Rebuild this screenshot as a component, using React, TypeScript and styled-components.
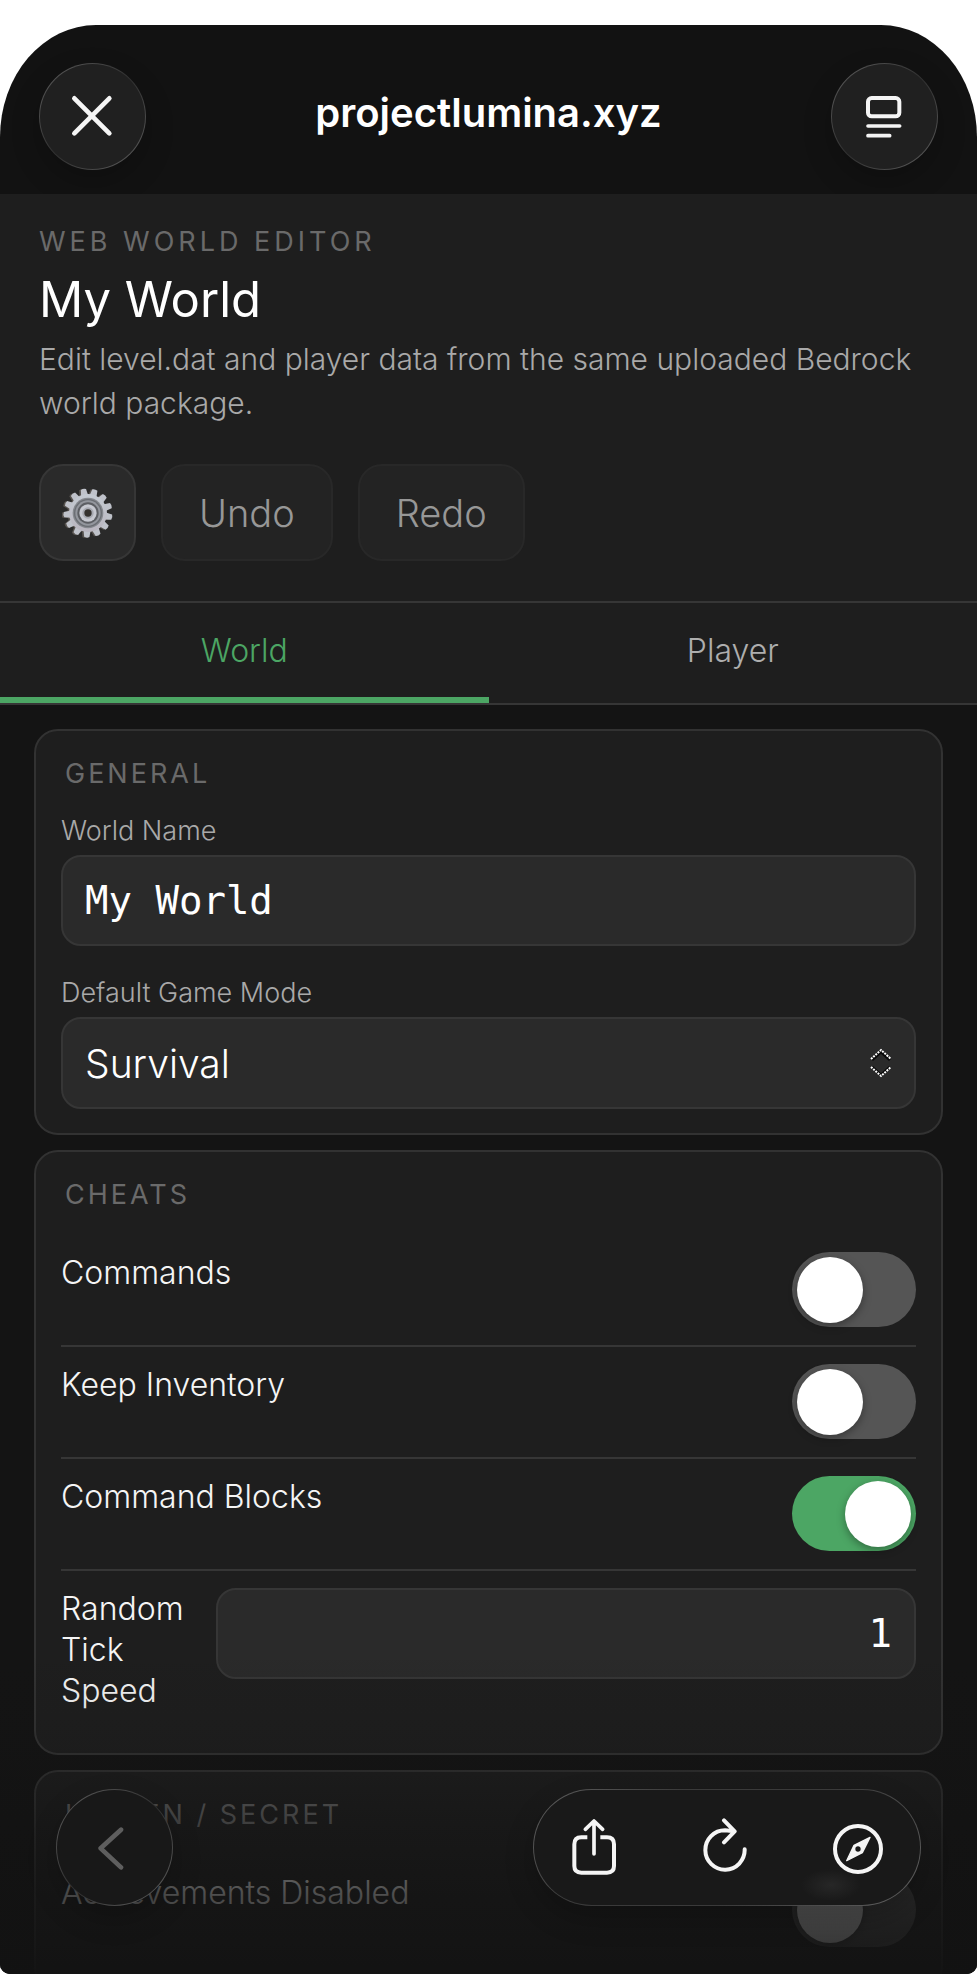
import React, { useId, useState } from 'react';
import styled, { createGlobalStyle, css } from 'styled-components';

const color = {
  chrome: '#121212',
  content: '#141414',
  panel: '#1e1e1e',
  field: '#2a2a2a',
  line: '#363636',
  text: '#f5f5f5',
  muted: '#a9a9a9',
  faint: '#6a6a6a',
  accent: '#4ca664',
};

const sans = "Inter, 'Liberation Sans', sans-serif";
const mono = "'DejaVu Sans Mono', 'Liberation Mono', monospace";

const GlobalStyle = createGlobalStyle`
  *, *::before, *::after { box-sizing: border-box; }
  body {
    margin: 0;
    padding-top: 25px;
    background: #ffffff;
    color: ${color.text};
    font-family: ${sans};
    font-weight: 300;
  }
  button, input, select { margin: 0; font-family: inherit; font-weight: inherit; }
`;

const Sheet = styled.div`
  position: relative;
  display: flex;
  flex-direction: column;
  height: calc(100vh - 25px);
  overflow: hidden;
  border-radius: 96px 96px 10px 10px / 112px 112px 10px 10px;
  background: ${color.chrome};
`;

const BrowserBar = styled.header`
  display: flex;
  flex: none;
  align-items: center;
  justify-content: space-between;
  padding: 38px 39px 24px;
`;

const SiteName = styled.div`
  padding-bottom: 8px;
  color: #ffffff;
  font-size: 40px;
  font-weight: 600;
  line-height: 48px;
`;

const glassRim = css`
  border: 1px solid transparent;
  box-shadow: 0 12px 30px rgba(0, 0, 0, 0.2);
`;

const RoundButton = styled.button<{ $size: number; $fill: string }>`
  ${glassRim}
  display: grid;
  place-items: center;
  width: ${(p) => p.$size}px;
  height: ${(p) => p.$size}px;
  padding: 0;
  border-radius: 50%;
  background:
    linear-gradient(${(p) => p.$fill}, ${(p) => p.$fill}) padding-box,
    linear-gradient(135deg, #606060, #303030 50%, #606060) border-box;
  color: #f5f5f5;

  &:disabled { color: #5e5e5e; }
`;

const Page = styled.main`
  flex: 1;
  min-height: 0;
  overflow: hidden;
  background: ${color.content};
`;

const Hero = styled.section`
  padding: 32px 39px 40px;
  border-bottom: 2px solid ${color.line};
  background: ${color.panel};
`;

const Eyebrow = styled.p`
  margin: 0 0 14px;
  color: ${color.faint};
  font-size: 27px;
  font-weight: 400;
  letter-spacing: 4px;
  line-height: 32px;
  text-transform: uppercase;
`;

const Title = styled.h1`
  margin: 0 0 9px;
  color: #ffffff;
  font-size: 49px;
  font-weight: 400;
  line-height: 56px;
`;

const Lead = styled.p`
  margin: 0 0 39px;
  color: ${color.muted};
  font-size: 30px;
  line-height: 44px;
`;

const Actions = styled.div`
  display: flex;
  gap: 25px;
`;

const ActionButton = styled.button<{ $square?: boolean }>`
  display: grid;
  place-items: center;
  width: ${(p) => (p.$square ? '97px' : 'auto')};
  height: 97px;
  padding: 0 ${(p) => (p.$square ? 0 : 36)}px;
  border: 2px solid ${color.line};
  border-radius: 24px;
  background: ${color.field};
  color: ${color.text};
  font-size: 38px;

  &:disabled {
    border-color: #282828;
    background: #232323;
    color: #979797;
  }
`;

const Tabs = styled.div`
  display: grid;
  grid-template-columns: 1fr 1fr;
  border-bottom: 2px solid ${color.line};
  background: ${color.panel};
`;

const Tab = styled.button<{ $active: boolean }>`
  height: 100px;
  padding: 0;
  border: 0;
  border-bottom: 6px solid ${(p) => (p.$active ? color.accent : 'transparent')};
  background: none;
  color: ${(p) => (p.$active ? color.accent : '#aeaeae')};
  font-size: 32px;
`;

const Cards = styled.div`
  display: flex;
  flex-direction: column;
  gap: 15px;
  padding: 24px 34px;
`;

const Card = styled.section`
  padding: 27px 25px 24px;
  border: 2px solid #323232;
  border-radius: 24px;
  background: ${color.panel};
`;

const CardTitle = styled.h2`
  margin: 0 0 24px;
  padding-left: 4px;
  color: ${color.faint};
  font-size: 27px;
  font-weight: 400;
  letter-spacing: 3px;
  line-height: 32px;
  text-transform: uppercase;
`;

const Field = styled.div`
  display: flex;
  flex-direction: column;
  gap: 7px;

  & + & { margin-top: 30px; }
`;

const FieldLabel = styled.label`
  color: ${color.muted};
  font-size: 27px;
  line-height: 34px;
`;

const control = css`
  width: 100%;
  border: 2px solid ${color.line};
  border-radius: 20px;
  outline: none;
  background: ${color.field};
  color: #ffffff;
`;

const TextBox = styled.input<{ $end?: boolean }>`
  ${control}
  appearance: none;
  height: 91px;
  padding: 0 22px;
  font-family: ${mono};
  font-size: 39px;
  font-weight: 400;
  text-align: ${(p) => (p.$end ? 'right' : 'left')};
`;

const SelectWrap = styled.div`
  position: relative;
  display: flex;
`;

const Select = styled.select`
  ${control}
  appearance: none;
  height: 92px;
  padding: 0 64px 0 22px;
  font-size: 39px;
`;

const SelectArrows = styled.svg`
  position: absolute;
  top: 50%;
  right: 23px;
  width: 24px;
  height: 30px;
  transform: translateY(-50%);
  pointer-events: none;
`;

const Row = styled.div<{ $wide?: boolean }>`
  display: grid;
  grid-template-columns: ${(p) => (p.$wide ? '124px 1fr' : '1fr auto')};
  gap: 31px;
  align-items: start;
  padding: 17px 0 18px;

  & + & { border-top: 2px solid ${color.line}; }
`;

const RowLabel = styled.label`
  color: ${color.text};
  font-size: 32px;
  line-height: 41px;
`;

const Switch = styled.input`
  appearance: none;
  display: flex;
  align-items: center;
  width: 124px;
  height: 75px;
  padding: 0 5px;
  border-radius: 38px;
  background: #555555;

  &::before {
    content: '';
    width: 66px;
    height: 66px;
    border-radius: 50%;
    background: #ffffff;
    box-shadow: 0 3px 8px rgba(0, 0, 0, 0.35);
  }

  &:checked {
    justify-content: flex-end;
    background: ${color.accent};
  }
`;

const Fade = styled.div`
  position: absolute;
  inset: auto 0 0;
  height: 324px;
  background: linear-gradient(
    rgba(18, 18, 18, 0),
    rgba(18, 18, 18, 0.12) 30%,
    rgba(18, 18, 18, 0.48) 52%,
    rgba(18, 18, 18, 0.74) 76%,
    rgba(18, 18, 18, 0.83) 90%,
    rgba(18, 18, 18, 0.94)
  );
  pointer-events: none;
`;

const BottomBar = styled.nav`
  position: absolute;
  inset: auto 56px 68px;
  display: flex;
  align-items: center;
  justify-content: space-between;
`;

const Pill = styled.div`
  ${glassRim}
  display: flex;
  align-items: center;
  justify-content: space-between;
  width: 388px;
  height: 117px;
  padding: 0 37px;
  border-radius: 59px;
  background:
    radial-gradient(30px 16px at 297px 95px, #272727, rgba(39, 39, 39, 0)) padding-box,
    linear-gradient(#191919, #191919) padding-box,
    linear-gradient(135deg, #606060, #3a3a3a 30%, #3a3a3a 60%, #606060) border-box;
`;

const PillButton = styled.button`
  display: grid;
  padding: 0;
  border: 0;
  background: none;
  color: #f5f5f5;
`;

const Glyph = styled.svg`
  display: block;
  fill: none;
  stroke: currentColor;
  stroke-linecap: round;
  stroke-linejoin: round;
`;

const teeth = Array.from({ length: 13 }, (_, i) => -11 + (i * 360) / 13);
const tooth = 'M-11 -50 L-8 -72 Q0 -76 8 -72 L11 -50 Z';

function Gear() {
  return (
    <svg width="52" height="52" viewBox="-78 -78 156 156" aria-hidden="true">
      <defs>
        <linearGradient id="steel" x1="0" y1="0" x2="0" y2="1">
          <stop offset="0" stopColor="#c4cad2" />
          <stop offset="1" stopColor="#b9b5bf" />
        </linearGradient>
      </defs>
      <g fill="#57534f" transform="translate(-5 1)">
        <circle r="57" />
        {teeth.map((a) => <path key={a} d={tooth} transform={`rotate(${a})`} />)}
      </g>
      <g fill="#bfc2ca">
        {teeth.map((a) => <path key={a} d={tooth} transform={`rotate(${a})`} />)}
      </g>
      <circle r="57" fill="url(#steel)" />
      <circle r="46" fill="#85888e" />
      <circle r="42" fill="#6a6d73" />
      <circle r="38" fill="#93969d" />
      <circle r="32" fill="#5c5e63" />
      <circle r="26" fill="#c6c8d0" />
      <circle r="17" fill="#a6a8b0" />
      <circle r="11" fill="#35322f" />
    </svg>
  );
}

function ToggleRow({ label, on = false }: { label: string; on?: boolean }) {
  const id = useId();
  return (
    <Row>
      <RowLabel htmlFor={id}>{label}</RowLabel>
      <Switch id={id} type="checkbox" role="switch" defaultChecked={on} />
    </Row>
  );
}

export default function App() {
  const [tab, setTab] = useState('World');

  return (
    <>
      <GlobalStyle />
      <Sheet>
        <BrowserBar>
          <RoundButton $size={107} $fill="#202020" aria-label="Close">
            <Glyph width="44" height="44" viewBox="212 284 132 132" strokeWidth="14">
              <path d="M222 294 327 399M327 294 222 399" />
            </Glyph>
          </RoundButton>
          <SiteName>projectlumina.xyz</SiteName>
          <RoundButton $size={107} $fill="#202020" aria-label="Page menu">
            <Glyph width="44" height="44" viewBox="1157 284 132 132" strokeWidth="12">
              <rect x="1175" y="293" width="94" height="55" rx="11" />
              <path d="M1175 377H1270M1175 406H1240" strokeWidth="11" />
            </Glyph>
          </RoundButton>
        </BrowserBar>

        <Page>
          <Hero>
            <Eyebrow>Web World Editor</Eyebrow>
            <Title>My World</Title>
            <Lead>Edit level.dat and player data from the same uploaded Bedrock world package.</Lead>
            <Actions>
              <ActionButton $square aria-label="Settings"><Gear /></ActionButton>
              <ActionButton disabled>Undo</ActionButton>
              <ActionButton disabled>Redo</ActionButton>
            </Actions>
          </Hero>

          <Tabs role="tablist">
            {['World', 'Player'].map((name) => (
              <Tab
                key={name}
                role="tab"
                aria-selected={tab === name}
                $active={tab === name}
                onClick={() => setTab(name)}
              >
                {name}
              </Tab>
            ))}
          </Tabs>

          <Cards>
            <Card>
              <CardTitle>General</CardTitle>
              <Field>
                <FieldLabel htmlFor="world-name">World Name</FieldLabel>
                <TextBox id="world-name" type="text" defaultValue="My World" />
              </Field>
              <Field>
                <FieldLabel htmlFor="game-mode">Default Game Mode</FieldLabel>
                <SelectWrap>
                  <Select id="game-mode" defaultValue="Survival">
                    <option>Survival</option>
                  </Select>
                  <SelectArrows viewBox="0 0 24 30" fill="none" aria-hidden="true">
                    <path d="M3 12 12 4 21 12M3 19 12 27 21 19" stroke="#080808" strokeWidth="3" />
                    <path
                      d="M2 11 12 2 22 11M2 19 12 28 22 19"
                      stroke="#ffffff"
                      strokeWidth="2"
                      strokeDasharray="2 1"
                    />
                  </SelectArrows>
                </SelectWrap>
              </Field>
            </Card>

            <Card>
              <CardTitle>Cheats</CardTitle>
              <ToggleRow label="Commands" />
              <ToggleRow label="Keep Inventory" />
              <ToggleRow label="Command Blocks" on />
              <Row $wide>
                <RowLabel htmlFor="tick-speed">Random Tick Speed</RowLabel>
                <TextBox id="tick-speed" $end type="text" inputMode="numeric" defaultValue="1" />
              </Row>
            </Card>

            <Card>
              <CardTitle>Hidden / Secret</CardTitle>
              <ToggleRow label="Achievements Disabled" />
            </Card>
          </Cards>
        </Page>

        <Fade />

        <BottomBar aria-label="Browser controls">
          <RoundButton $size={117} $fill="#181818" disabled aria-label="Back">
            <Glyph width="44" height="44" viewBox="277 797 132 132" strokeWidth="14">
              <path d="M361 808 300 864 361 921" />
            </Glyph>
          </RoundButton>
          <Pill>
            <PillButton aria-label="Share">
              <Glyph width="46" height="60" viewBox="284 773 138 180" strokeWidth="12">
                <path
                  d="M333 831H315Q294 831 294 852V917Q294 937 315 937H392Q413 937 413 917V852Q413 831 392 831H372"
                  strokeLinecap="butt"
                />
                <path d="M353 881V784M327 807 353 782 379 807" strokeWidth="11" />
              </Glyph>
            </PillButton>
            <PillButton aria-label="Reload">
              <Glyph width="46" height="60" viewBox="674 773 138 180" strokeWidth="12">
                <path d="M802 867A59 59 0 1 1 743 810L770 813M740 780 772 813 740 846" />
              </Glyph>
            </PillButton>
            <PillButton aria-label="Open in browser">
              <Glyph width="50" height="60" viewBox="1068 773 150 180" strokeWidth="12">
                <circle cx="1143" cy="866" r="69" />
                <path
                  d="M1179 831 1156 877 1109 901 1131 855ZM1143 856a10 10 0 1 0 0 20a10 10 0 1 0 0-20Z"
                  fill="currentColor"
                  fillRule="evenodd"
                  strokeWidth="4"
                />
              </Glyph>
            </PillButton>
          </Pill>
        </BottomBar>
      </Sheet>
    </>
  );
}
